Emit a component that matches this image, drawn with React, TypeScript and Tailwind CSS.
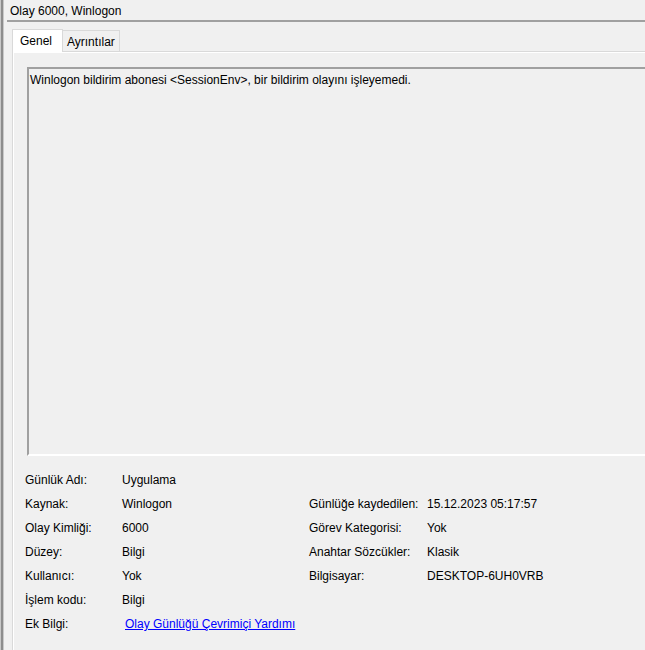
const leftRows: [string, string][] = [
  ['Günlük Adı:', 'Uygulama'],
  ['Kaynak:', 'Winlogon'],
  ['Olay Kimliği:', '6000'],
  ['Düzey:', 'Bilgi'],
  ['Kullanıcı:', 'Yok'],
  ['İşlem kodu:', 'Bilgi'],
];

const rightRows: [string, string][] = [
  ['Günlüğe kaydedilen:', '15.12.2023 05:17:57'],
  ['Görev Kategorisi:', 'Yok'],
  ['Anahtar Sözcükler:', 'Klasik'],
  ['Bilgisayar:', 'DESKTOP-6UH0VRB'],
];

function Field({ label, value, labelWidth }: { label: string; value: string; labelWidth: string }) {
  return (
    <div className="flex h-[24px] items-center">
      <span className={labelWidth}>{label}</span>
      <span>{value}</span>
    </div>
  );
}

export default function App() {
  return (
    <div
      className="flex h-[650px] w-[645px] overflow-hidden bg-[#f0f0f0] text-[12px] leading-[16px] text-black"
      style={{ fontFamily: '"Liberation Sans", Arial, sans-serif' }}
    >
      <div className="h-full w-[4px] shrink-0 border-x border-x-[#c8c8c8] bg-[#8c8c8c]" />
      <div className="flex min-w-0 flex-1 flex-col">
        <div className="h-[20px] pl-[6px] pt-[3px]">Olay 6000, Winlogon</div>
        <div className="ml-[3px] h-[2px] bg-[#a0a0a0]" />

        <div className="ml-[8px] mt-[7px] flex items-end">
          <div className="relative z-10 -mb-px flex h-[23px] w-[51px] items-start border border-b-0 border-[#d9d9d9] bg-white pl-[7px] pt-[3px]">
            Genel
          </div>
          <div className="flex h-[21px] items-start border border-b-0 border-l-0 border-[#d9d9d9] bg-[#f0f0f0] px-[4px] pt-[3px]">
            Ayrıntılar
          </div>
        </div>

        <div className="ml-[8px] flex flex-1 flex-col border-l border-t border-[#d9d9d9]">
          <div className="flex flex-1 flex-col border-l border-t border-white">
            <div className="ml-[13px] mt-[14px] h-[389px] border-l-2 border-t-2 border-[#a0a0a0] border-b-2 border-b-white">
              <div className="-mr-[40px] pl-[1px] pt-[3px]">
                Winlogon bildirim abonesi &lt;SessionEnv&gt;, bir bildirim olayını işleyemedi.
              </div>
            </div>

            <div className="ml-[11px] mt-[12px] flex">
              <div className="w-[284px]">
                {leftRows.map(([l, v]) => (
                  <Field key={l} label={l} value={v} labelWidth="w-[97px]" />
                ))}
                <div className="flex h-[24px] items-center">
                  <span className="w-[100px]">Ek Bilgi:</span>
                  <a href="#" className="text-[#0000ff] underline">
                    Olay Günlüğü Çevrimiçi Yardımı
                  </a>
                </div>
              </div>
              <div className="mt-[24px]">
                {rightRows.map(([l, v]) => (
                  <Field key={l} label={l} value={v} labelWidth="w-[118px]" />
                ))}
              </div>
            </div>
          </div>
        </div>
      </div>
    </div>
  );
}
